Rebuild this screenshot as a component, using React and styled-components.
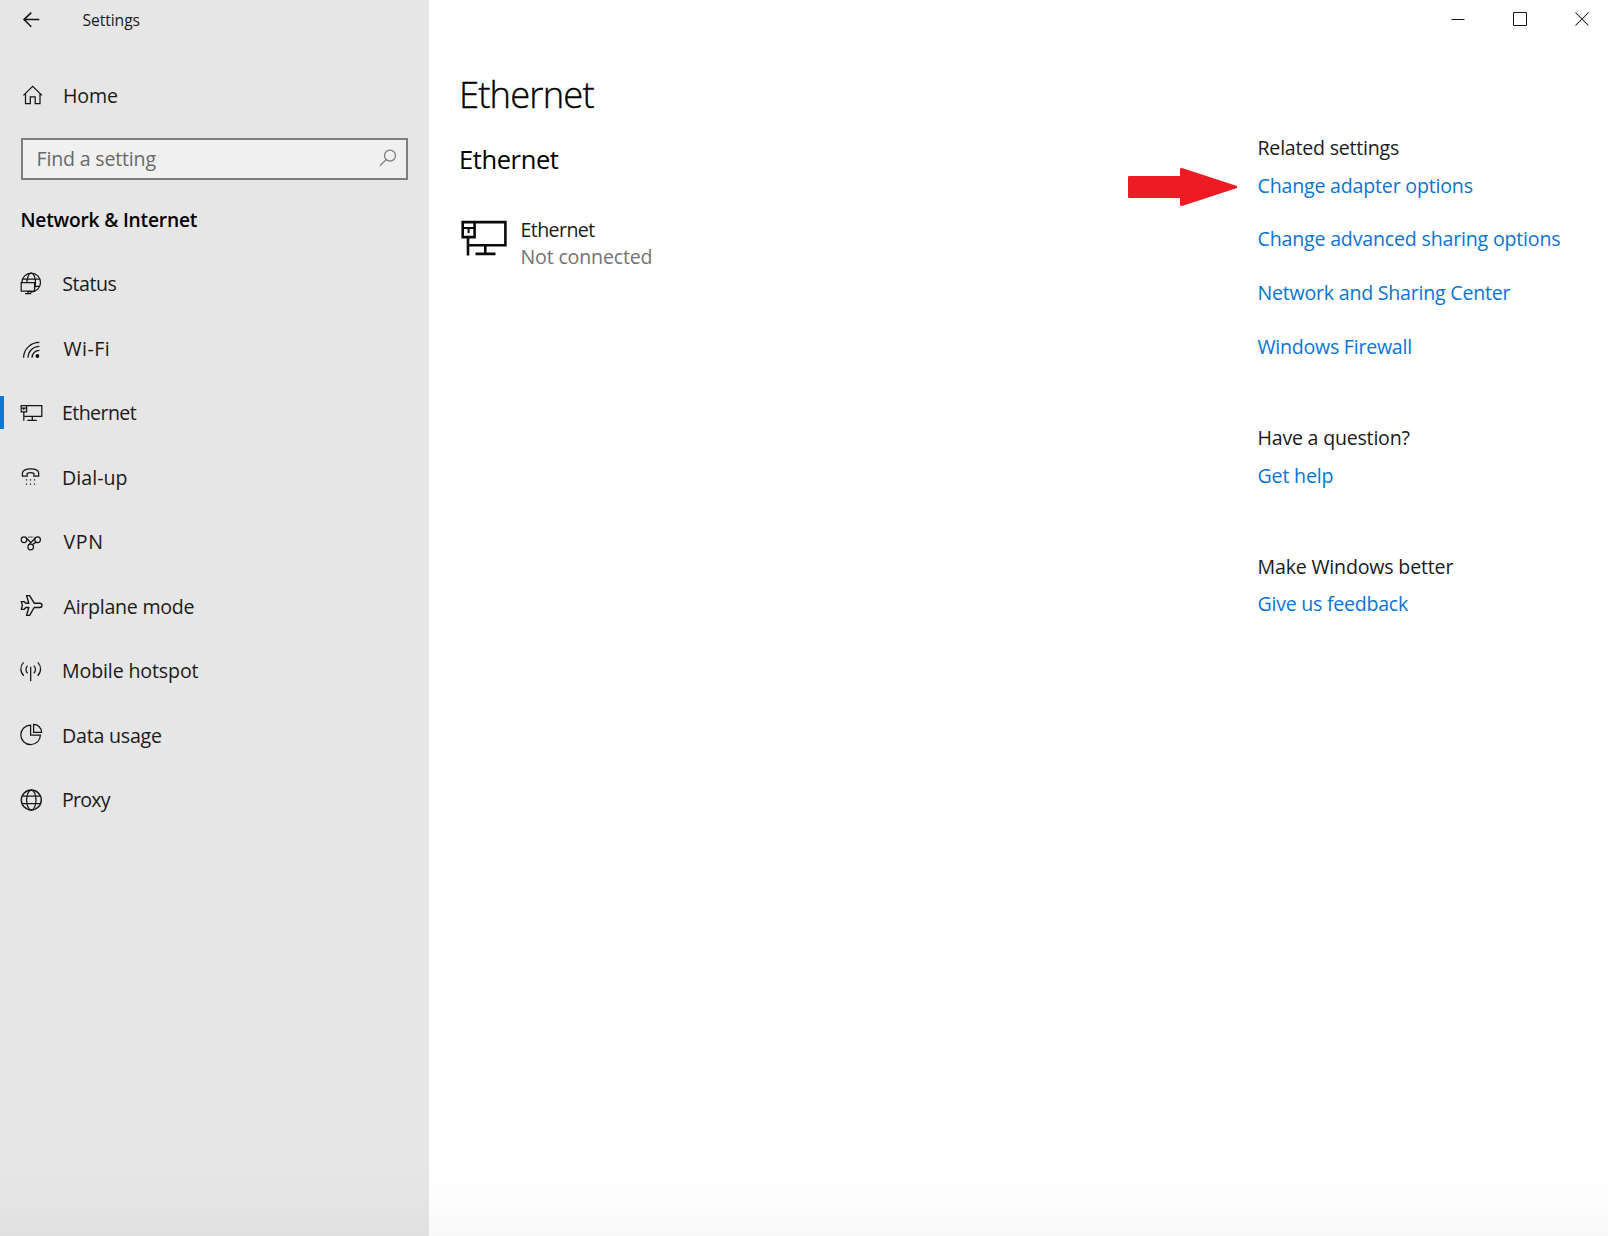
import React from 'react';
import styled, { createGlobalStyle } from 'styled-components';

const Global = createGlobalStyle`
  *, *::before, *::after { box-sizing: border-box; }
  html, body { margin: 0; background: #fff; overflow: hidden; }
  body { font-family: "Open Sans", "Noto Sans", sans-serif; color: #1a1a1a; }
  button { font: inherit; color: inherit; background: none; border: 0; padding: 0; }
  h1, h2, h3, p, ul { margin: 0; padding: 0; font-weight: 400; list-style: none; }
  svg { display: block; flex: none; overflow: visible; }
`;

const Window = styled.div`
  position: relative;
  display: flex;
  width: 1608px;
  height: 1236px;
  font-size: 19.6px;
  white-space: nowrap;
  &::after {
    content: "";
    position: absolute;
    inset: auto 0 0 0;
    height: 76px;
    background: linear-gradient(rgba(0, 0, 0, 0), rgba(0, 0, 0, 0.008) 55%, rgba(0, 0, 0, 0.028));
    pointer-events: none;
  }
`;

const Sidebar = styled.aside`
  display: flex;
  flex-direction: column;
  width: 429px;
  flex: none;
  background: #e6e6e6;
`;

const TitleBar = styled.header`
  display: flex;
  align-items: center;
  gap: 42.5px;
  height: 40px;
  padding-left: 23px;
  font-size: 15.7px;
  letter-spacing: -0.09px;
`;

const BackButton = styled.button`
  height: 38px;
  display: flex;
  align-items: center;
  padding-bottom: 1px;
`;

const NavRow = styled.div`
  display: flex;
  align-items: center;
  height: 64.5px;
  padding-left: ${(p) => (p.$active ? 15 : 19)}px;
  border-left: ${(p) => (p.$active ? '4px solid transparent' : '0')};
  border-image: ${(p) => (p.$active ? 'linear-gradient(transparent 16px, #0f78d7 16px, #0f78d7 48px, transparent 48px) 1 / 0 0 0 4px' : 'none')};
`;

const HomeRow = styled(NavRow)`
  height: 64px;
  margin-top: 23px;
`;

const Label = styled.span`
  margin-left: ${(p) => p.$indent}px;
  letter-spacing: ${(p) => p.$track}px;
`;

const SearchBox = styled.div`
  display: flex;
  align-items: center;
  justify-content: space-between;
  margin: 11px 21.5px 0 21px;
  height: 42px;
  flex: none;
  padding: 0 9px 2px 13.5px;
  border: 2px solid #7e7e7e;
  background: #f0f0f0;
  color: #6a6a6a;
  letter-spacing: -0.19px;
`;

const Category = styled.h2`
  && { font-weight: 600; }
  margin: 20px 0 11.5px 20.5px;
  font-size: 19.2px;
  line-height: 40px;
  letter-spacing: -0.2px;
  color: #000;
`;

const Main = styled.main`
  flex: 1;
  display: flex;
  flex-direction: column;
`;

const Controls = styled.div`
  display: flex;
  justify-content: flex-end;
  gap: 10px;
  height: 40px;
`;

const ControlButton = styled.button`
  display: flex;
  align-items: center;
  justify-content: center;
  width: 52px;
  height: 38px;
`;

const Body = styled.div`
  display: grid;
  grid-template-columns: 798.5px 1fr;
  padding-left: 30px;
`;

const Title = styled.h1`
  && { font-weight: 300; }
  margin-top: 29px;
  font-size: 36.4px;
  line-height: 50px;
  letter-spacing: -0.85px;
  color: #000;
  -webkit-text-stroke: 0.35px #000;
`;

const Subtitle = styled.h2`
  margin-top: 22px;
  font-size: 25.5px;
  line-height: 36px;
  letter-spacing: -0.4px;
  color: #000;
`;

const Adapter = styled.div`
  display: flex;
  gap: 13.5px;
  margin: 39px 0 0 -1px;
  line-height: 27px;
`;

const AdapterIcon = styled.svg`
  margin-top: -1px;
`;

const AdapterName = styled.p`
  letter-spacing: -0.6px;
`;

const AdapterState = styled.p`
  color: #737373;
  letter-spacing: -0.18px;
`;

const Related = styled.div`
  display: flex;
  flex-direction: column;
  gap: 65.3px;
  padding-top: 95px;
`;

const Section = styled.section`
  position: relative;
  line-height: 26px;
`;

const SectionTitle = styled.h3`
  font-size: 19.6px;
  margin-bottom: 11.6px;
  letter-spacing: ${(p) => p.$track}px;
`;

const Links = styled.ul`
  display: grid;
  row-gap: 27.7px;
`;

const Link = styled.li`
  color: #0a74d4;
  letter-spacing: ${(p) => p.$track}px;
`;

const Pointer = styled.svg`
  position: absolute;
  left: -129.5px;
  top: 33px;
`;

const Icon = ({ size = 24, width = 1.25, children }) => (
  <svg width={size} height={size} viewBox={`0 0 ${size} ${size}`} fill="none" stroke="#151515" strokeWidth={width}>
    {children}
  </svg>
);

const icons = {
  home: <path d="M4.4 12.4 13.7 3.3 23 12.4M6.5 10.6V20.6H11.3V13.8H16.2V20.6H21V10.6" />,
  status: (
    <>
      <circle cx="12.2" cy="10.5" r="9.3" />
      <ellipse cx="12.2" cy="10.5" rx="4.3" ry="9.3" />
      <path d="M3.6 7.2H20.8M3.6 14.4H20.8" />
      <path d="M2.2 10.5H15.6V19H2.2Z" fill="#e6e6e6" />
      <path d="M9 19V21.6M6 21.7H12.2" />
    </>
  ),
  wifi: (
    <>
      <path d="M4.6 21.8A15.7 15.5 0 0 1 20.4 6.4M9 21.8A11.4 11.4 0 0 1 20.4 10.4M13 21.8A7.4 7.4 0 0 1 20.4 14.3" />
      <circle cx="18.4" cy="20" r="1.9" fill="#111" stroke="none" />
    </>
  ),
  ethernet: (
    <path d="M7.6 4.5H22.8V15.4H4.7M2.2 4.5H7.6V10.9H2.2ZM2.2 7.2H7.6M4.8 7.2V9M4.8 10.9V19.7M13.3 15.4V19.3M8.3 19.4H17.8" />
  ),
  dialup: (
    <>
      <path d="M3.4 11V8.3C3.4 5 7.2 3.8 11.5 3.8S19.7 5 19.7 8.3V11H14.9V8.4C13 7.6 10.2 7.6 8.2 8.4V11Z" />
      <path d="M6.9 14.8H8.1M10.9 14.8H12.1M14.9 14.8H16.1M6.9 19H8.1M10.9 19H12.1M14.9 19H16.1" />
    </>
  ),
  vpn: (
    <>
      <circle cx="5" cy="9.7" r="2.8" />
      <circle cx="18.6" cy="9.7" r="2.8" />
      <circle cx="11.7" cy="17" r="2.8" />
      <path d="M7 7.8 11.4 12M16.6 7.8 9.8 14.8M18 12.4C15.5 12.4 14.8 13.4 13.4 14.8" />
      <path d="M9.3 7.1H14.4" strokeDasharray="1.2 1" />
    </>
  ),
  airplane: (
    <path
      strokeWidth="1.4"
      strokeLinejoin="round"
      d="M7.6 1.6H10.6L15.2 9.2H20.8A2.1 2.1 0 0 1 20.8 13.5H15.2L10.6 21.4H7.6L9.8 13.5H6.8L5 15.4H2.3L3.4 11.4 2.3 7.6H5L6.8 9.2H9.8Z"
    />
  ),
  hotspot: (
    <path d="M11.7 7.8V22.3M8.6 6.6C6.4 8.7 6.4 12.1 8.6 14.2M14.8 6.6C17 8.7 17 12.1 14.8 14.2M4.6 3.4C.9 7 .9 13.2 4.8 16.8M18.8 3.4C22.5 7 22.5 13.2 18.6 16.8" />
  ),
  data: (
    <path d="M11.6 2.1A9.8 9.8 0 1 0 21.4 12H11.6ZM14.6 1.4V9.3H22.6A8 8 0 0 0 14.6 1.4Z" />
  ),
  proxy: (
    <>
      <circle cx="12.3" cy="12" r="10" strokeWidth="1.4" />
      <ellipse cx="12.3" cy="12" rx="4.7" ry="10" />
      <path d="M3.2 8.2H21.4M3.2 15.6H21.4" />
    </>
  ),
};

const nav = [
  { icon: 'status', text: 'Status', indent: 19.3, track: -0.5 },
  { icon: 'wifi', text: 'Wi-Fi', indent: 20.5, track: 0.45 },
  { icon: 'ethernet', text: 'Ethernet', indent: 19, track: -0.6 },
  { icon: 'dialup', text: 'Dial-up', indent: 19, track: 0.05 },
  { icon: 'vpn', text: 'VPN', indent: 20.5, track: 0.6 },
  { icon: 'airplane', text: 'Airplane mode', indent: 20.5, track: -0.26 },
  { icon: 'hotspot', text: 'Mobile hotspot', indent: 19, track: -0.13 },
  { icon: 'data', text: 'Data usage', indent: 19, track: -0.22 },
  { icon: 'proxy', text: 'Proxy', indent: 19, track: -0.8 },
];

const sections = [
  {
    title: 'Related settings',
    track: -0.23,
    pointer: true,
    links: [
      ['Change adapter options', -0.2],
      ['Change advanced sharing options', -0.19],
      ['Network and Sharing Center', -0.23],
      ['Windows Firewall', -0.26],
    ],
  },
  { title: 'Have a question?', track: -0.22, links: [['Get help', -0.18]] },
  { title: 'Make Windows better', track: -0.19, links: [['Give us feedback', -0.26]] },
];

export default function App() {
  return (
    <Window>
      <Global />
      <Sidebar>
        <TitleBar>
          <BackButton aria-label="Back">
            <svg width="17" height="16" viewBox="0 0 17 16" fill="none" stroke="#111" strokeWidth="1.5">
              <path d="M16.3 7.6H1M8.3 .6 1 7.6 8.3 14.8" />
            </svg>
          </BackButton>
          <span>Settings</span>
        </TitleBar>
        <HomeRow>
          <Icon>{icons.home}</Icon>
          <Label $indent={20} $track={-0.15}>Home</Label>
        </HomeRow>
        <SearchBox>
          <span>Find a setting</span>
          <svg width="18" height="18" viewBox="0 0 18 18" fill="none" stroke="#777" strokeWidth="1.2">
            <circle cx="11" cy="6.6" r="5.5" />
            <path d="M7.1 10.6.9 16.9" />
          </svg>
        </SearchBox>
        <Category>Network &amp; Internet</Category>
        <nav>
          {nav.map((n) => (
            <NavRow key={n.text} $active={n.text === 'Ethernet'}>
              <Icon>{icons[n.icon]}</Icon>
              <Label $indent={n.indent} $track={n.track}>{n.text}</Label>
            </NavRow>
          ))}
        </nav>
      </Sidebar>
      <Main>
        <Controls>
          <ControlButton aria-label="Minimize">
            <Icon size={14} width={1}><path d="M.5 7.5H13.5" /></Icon>
          </ControlButton>
          <ControlButton aria-label="Maximize">
            <Icon size={14} width={1}><path d="M.5 .5H13.5V13.5H.5Z" /></Icon>
          </ControlButton>
          <ControlButton aria-label="Close">
            <Icon size={14} width={1.05}><path d="M.5 .5 13.5 13.5M13.5 .5.5 13.5" /></Icon>
          </ControlButton>
        </Controls>
        <Body>
          <div>
            <Title>Ethernet</Title>
            <Subtitle>Ethernet</Subtitle>
            <Adapter>
              <AdapterIcon width="49" height="44" viewBox="0 0 49 44" fill="none" stroke="#0a0a0a" strokeWidth="2.6">
                <path d="M16.5 7.1H47.4V30.3H10M4.7 7.1H16.6V22.1H4.7ZM10 22V40.4M27.3 30.3V38.6M17.5 38.9H37.5" />
                <path d="M4.7 13H16.6M10.6 13V18" strokeWidth="2" />
              </AdapterIcon>
              <div>
                <AdapterName>Ethernet</AdapterName>
                <AdapterState>Not connected</AdapterState>
              </div>
            </Adapter>
          </div>
          <Related>
            {sections.map((s) => (
              <Section key={s.title}>
                <SectionTitle $track={s.track}>{s.title}</SectionTitle>
                <Links>
                  {s.links.map(([text, track]) => (
                    <Link key={text} $track={track}>{text}</Link>
                  ))}
                </Links>
                {s.pointer && (
                  <Pointer width="110" height="38" viewBox="0 0 110 38">
                    <path fill="#ed1c24" d="M1 8H52V1Q52 0 54 0L109 18V20L54 38Q52 38 52 37V30H1Q0 30 0 29V9Q0 8 1 8Z" />
                  </Pointer>
                )}
              </Section>
            ))}
          </Related>
        </Body>
      </Main>
    </Window>
  );
}
